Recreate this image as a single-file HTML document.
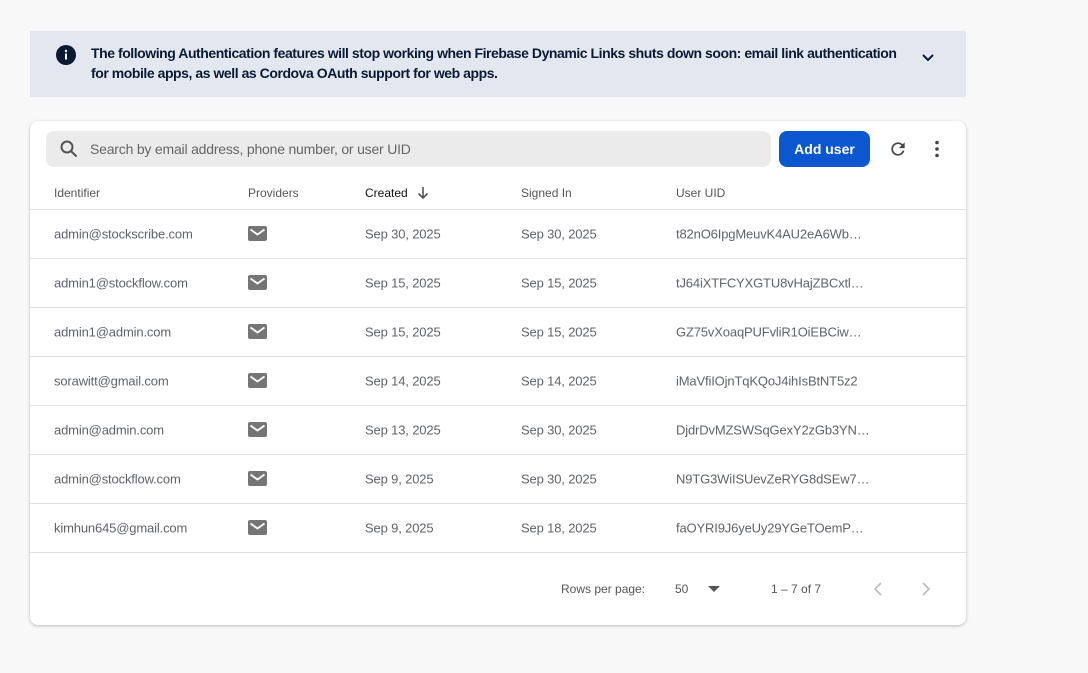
<!DOCTYPE html><html><head><style>
body{margin:0;background:#f8f8f8;font-family:"Liberation Sans",Arial,sans-serif;width:1088px;height:673px;overflow:hidden;position:relative}
.ban{position:absolute;left:30px;top:31px;width:936px;height:66px;background:#e3e8f0}
.ban .t{position:absolute;left:61px;top:12px;font-size:14px;font-weight:bold;color:#0b1a33;line-height:20px;width:840px;letter-spacing:-0.45px}
.card{position:absolute;left:30px;top:121px;width:936px;height:504px;background:#fff;border-radius:8px;box-shadow:0 1px 3px rgba(0,0,0,.25)}
.search{position:absolute;left:16px;top:10px;width:725px;height:36px;background:#ebebeb;border-radius:8px}
.search span{position:absolute;left:44px;top:10px;font-size:14px;color:#666;letter-spacing:-0.2px}
.btn{position:absolute;left:749px;top:10px;width:91px;height:36px;background:#0b57d0;border-radius:8px;color:#fff;font-weight:bold;font-size:14px;text-align:center;line-height:36px}
.hdr,.row{position:absolute;left:0;width:936px;font-size:12px;color:#555}
.hdr{top:55px;height:33px;border-bottom:1px solid #e0e0e0}
.row{height:48px;border-bottom:1px solid #e0e0e0;font-size:13px;color:#5f6368}
.c{position:absolute;top:50%;transform:translateY(-50%);white-space:nowrap}
.row .c{letter-spacing:-0.15px}
.pg{position:absolute;top:461px;font-size:12px;color:#555}
</style></head><body>
<div class="ban">
<svg style="position:absolute;left:26px;top:14px" width="20" height="20" viewBox="0 0 20 20"><circle cx="10" cy="10" r="10" fill="#0b1a33"/><rect x="9" y="8.5" width="2" height="6" fill="#fff"/><circle cx="10" cy="6" r="1.2" fill="#fff"/></svg>
<div class="t">The following Authentication features will stop working when Firebase Dynamic Links shuts down soon: email link authentication<br>for mobile apps, as well as Cordova OAuth support for web apps.</div>
<svg style="position:absolute;left:891px;top:19px" width="14" height="14" viewBox="0 0 14 14"><path d="M2 5l5 5 5-5" stroke="#0b1a33" stroke-width="2" fill="none"/></svg>
</div>
<div class="card">
<div class="search"><svg style="position:absolute;left:13px;top:8px" width="20" height="20" viewBox="0 0 20 20"><circle cx="8" cy="8" r="5.5" stroke="#555" stroke-width="2" fill="none"/><path d="M12 12l5.5 5.5" stroke="#555" stroke-width="2"/></svg><span>Search by email address, phone number, or user UID</span></div>
<div class="btn">Add user</div>
<svg style="position:absolute;left:858px;top:18px" width="20" height="20" viewBox="0 0 24 24"><path d="M17.65 6.350A7.96 7.96 0 0 0 12 4a8 8 0 1 0 7.73 10h-2.08A6 6 0 1 1 12 6c1.66 0 3.14.69 4.22 1.78L13 11h7V4z" fill="#444"/></svg>
<svg style="position:absolute;left:897px;top:18px" width="20" height="20" viewBox="0 0 20 20"><circle cx="10" cy="3.5" r="1.8" fill="#444"/><circle cx="10" cy="10" r="1.8" fill="#444"/><circle cx="10" cy="16.5" r="1.8" fill="#444"/></svg>
<div class="hdr"><span class="c" style="left:24px">Identifier</span><span class="c" style="left:218px">Providers</span><span class="c" style="left:335px;color:#111">Created <svg style="vertical-align:-3px;margin-left:6px" width="12" height="14" viewBox="0 0 12 14"><path d="M6 1v11M1.5 7.5L6 12l4.5-4.5" stroke="#555" stroke-width="1.6" fill="none"/></svg></span><span class="c" style="left:491px">Signed In</span><span class="c" style="left:646px">User UID</span></div>
<span class="pg" style="left:531px">Rows per page:</span>
<span class="pg" style="left:645px">50</span>
<svg style="position:absolute;left:678px;top:465px" width="12" height="6"><path d="M0 0h12L6 6z" fill="#555"/></svg>
<span class="pg" style="left:741px">1 – 7 of 7</span>
<svg style="position:absolute;left:842px;top:460px" width="12" height="16"><path d="M9 2L3 8l6 6" stroke="#bbb" stroke-width="1.6" fill="none"/></svg>
<svg style="position:absolute;left:890px;top:460px" width="12" height="16"><path d="M3 2l6 6-6 6" stroke="#bbb" stroke-width="1.6" fill="none"/></svg>
<div class="row" style="top:89px"><span class="c" style="left:24px">admin@stockscribe.com</span><span class="c" style="left:335px">Sep 30, 2025</span><span class="c" style="left:491px">Sep 30, 2025</span><span class="c" style="left:646px">t82nO6IpgMeuvK4AU2eA6Wb…</span></div>
<div class="row" style="top:138px"><span class="c" style="left:24px">admin1@stockflow.com</span><span class="c" style="left:335px">Sep 15, 2025</span><span class="c" style="left:491px">Sep 15, 2025</span><span class="c" style="left:646px">tJ64iXTFCYXGTU8vHajZBCxtl…</span></div>
<div class="row" style="top:187px"><span class="c" style="left:24px">admin1@admin.com</span><span class="c" style="left:335px">Sep 15, 2025</span><span class="c" style="left:491px">Sep 15, 2025</span><span class="c" style="left:646px">GZ75vXoaqPUFvliR1OiEBCiw…</span></div>
<div class="row" style="top:236px"><span class="c" style="left:24px">sorawitt@gmail.com</span><span class="c" style="left:335px">Sep 14, 2025</span><span class="c" style="left:491px">Sep 14, 2025</span><span class="c" style="left:646px">iMaVfiIOjnTqKQoJ4ihIsBtNT5z2</span></div>
<div class="row" style="top:285px"><span class="c" style="left:24px">admin@admin.com</span><span class="c" style="left:335px">Sep 13, 2025</span><span class="c" style="left:491px">Sep 30, 2025</span><span class="c" style="left:646px">DjdrDvMZSWSqGexY2zGb3YN…</span></div>
<div class="row" style="top:334px"><span class="c" style="left:24px">admin@stockflow.com</span><span class="c" style="left:335px">Sep 9, 2025</span><span class="c" style="left:491px">Sep 30, 2025</span><span class="c" style="left:646px">N9TG3WiISUevZeRYG8dSEw7…</span></div>
<div class="row" style="top:383px"><span class="c" style="left:24px">kimhun645@gmail.com</span><span class="c" style="left:335px">Sep 9, 2025</span><span class="c" style="left:491px">Sep 18, 2025</span><span class="c" style="left:646px">faOYRI9J6yeUy29YGeTOemP…</span></div>
<svg style="position:absolute;left:218px;top:105px" width="20" height="340" viewBox="0 0 20 340">
<g id="m"><rect x="0" y="0" width="19" height="15" rx="2" fill="#757575"/><path d="M2.5 3.5l7 5 7-5" stroke="#fff" stroke-width="1.8" fill="none"/></g>
<use href="#m" y="49"/><use href="#m" y="98"/><use href="#m" y="147"/><use href="#m" y="196"/><use href="#m" y="245"/><use href="#m" y="294"/>
</svg>
</div>
</body></html>
